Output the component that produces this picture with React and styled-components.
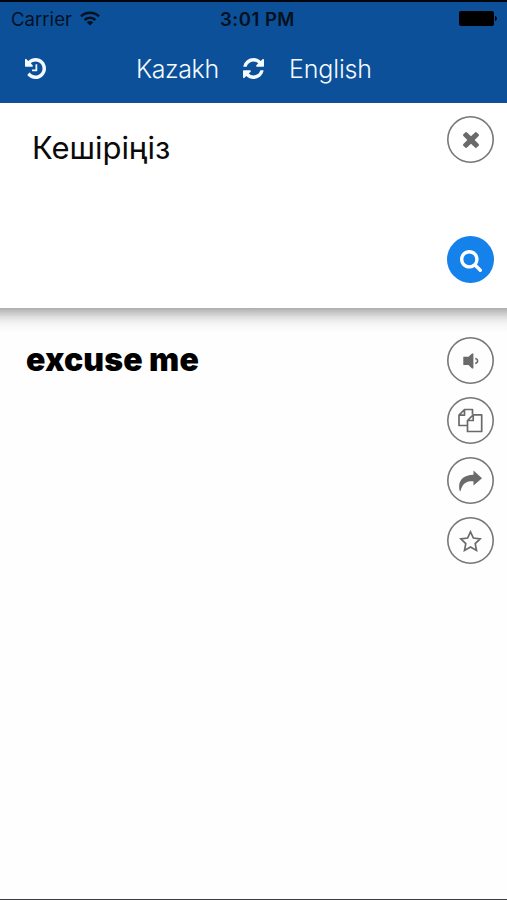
import React from 'react';
import styled, { createGlobalStyle } from 'styled-components';

const GlobalStyle = createGlobalStyle`
  * {
    box-sizing: border-box;
  }

  body {
    margin: 0;
    background: #fefefe;
    font-family: Inter, 'Liberation Sans', sans-serif;
  }

  svg {
    display: block;
  }
`;

const Screen = styled.div`
  display: flex;
  flex-direction: column;
  height: 900px;
  overflow: hidden;
  border-bottom: 1px solid #3c3c3e;
`;

const Header = styled.header`
  flex: none;
  height: 102.5px;
  border-top: 2px solid #02060c;
  background: #0b5098;
`;

const StatusBar = styled.div`
  display: grid;
  grid-template-columns: 1fr auto 1fr;
  align-items: center;
  height: 33px;
  padding: 0 10px 0 11px;
  color: #03101f;
`;

const Carrier = styled.div`
  display: flex;
  align-items: center;
  gap: 8px;
  font-size: 18.5px;
  letter-spacing: 0.05px;
`;

const Clock = styled.div`
  margin-left: 7px;
  font-size: 18.5px;
  font-weight: 600;
  letter-spacing: 0.5px;
`;

const Battery = styled.svg`
  justify-self: end;
`;

const NavBar = styled.nav`
  display: grid;
  grid-template-columns: 136px auto 1fr;
  align-items: center;
  height: 67px;
  color: #f4faff;
`;

const HistoryButton = styled.div`
  padding-left: 25px;
`;

const Languages = styled.div`
  display: flex;
  align-items: center;
  font-size: 25px;
  font-weight: 350;
`;

const Language = styled.span`
  width: 82px;
  letter-spacing: ${props => props.$spacing}px;
  white-space: nowrap;
`;

const SwapButton = styled.div`
  margin: 0 25px;
`;

const SourcePanel = styled.section`
  display: flex;
  flex: none;
  justify-content: space-between;
  height: 205.5px;
  padding: 13px 13px 25px 32px;
  background: #fff;
`;

const SourceText = styled.div`
  margin-top: 12px;
  font-size: 31px;
  line-height: 40px;
  letter-spacing: -0.05px;
  color: #0a0a0a;
`;

const ResultPanel = styled.section`
  display: flex;
  flex: 1;
  justify-content: space-between;
  padding: 29px 13px 0 26px;
  background: linear-gradient(#adadad, #c4c4c4 4px, #dedede 9px, #f1f1f1 14px, #f9f9f9 19px, #fefefe 25px);
`;

const ResultText = styled.div`
  margin-top: 3px;
  font-size: 32px;
  font-weight: 900;
  line-height: 40px;
  letter-spacing: 0.1px;
  color: #000;
`;

const Actions = styled.div`
  display: flex;
  flex-direction: column;
  justify-content: ${props => (props.$spread ? 'space-between' : 'flex-start')};
  gap: 13px;
`;

const RoundButton = styled.div`
  display: flex;
  align-items: center;
  justify-content: center;
  width: 47px;
  height: 47px;
  padding-top: ${props => props.$drop || 0}px;
  border-radius: 50%;
  box-shadow: ${props => (props.$primary ? 'none' : 'inset 0 0 0 1.6px #777')};
  background: ${props => (props.$primary ? '#1581ea' : 'transparent')};
  color: ${props => (props.$primary ? '#fff' : '#6a6a6a')};
`;

const WifiIcon = () => (
  <svg width="20" height="15" viewBox="0 0 20 15" fill="none" stroke="currentColor" strokeWidth="2.5">
    <path d="M1 5.3C6 .4 14 .4 19 5.3" />
    <path d="M4.6 9C7.7 6.1 12.3 6.1 15.4 9" />
    <path d="M10 14.5l-3.3-3.2c1.9-1.6 4.7-1.6 6.6 0z" fill="currentColor" stroke="none" />
  </svg>
);

const HistoryIcon = () => (
  <svg width="21" height="21" viewBox="0 128 1536 1536" fill="currentColor">
    <path d="M1536 896q0 156-61 298t-164 245-245 164-298 61q-172 0-327-72.500t-264-204.500q-7-10-6.500-22.500t8.500-20.500l137-138q10-9 25-9 16 2 23 12 73 95 179 147t225 52q104 0 198.500-40.500t163.500-109.500 109.500-163.500 40.500-198.500-40.500-198.500-109.500-163.500-163.500-109.500-198.500-40.500q-98 0-188 35.500t-160 101.500l137 138q31 30 14 69-17 40-59 40h-448q-26 0-45-19t-19-45v-448q0-42 40-59 39-17 69 14l130 129q107-101 244.500-156.500t284.500-55.500q156 0 298 61t245 164 164 245 61 298zm-640-288v448q0 14-9 23t-23 9h-320q-14 0-23-9t-9-23v-64q0-14 9-23t23-9h224v-352q0-14 9-23t23-9h64q14 0 23 9t9 23z" />
  </svg>
);

const SwapIcon = () => (
  <svg width="21" height="21" viewBox="128 128 1536 1536" fill="currentColor">
    <path d="M1639 1056q0 5-1 7-64 268-268 434.500t-478 166.500q-146 0-282.500-55t-243.500-157l-129 129q-19 19-45 19t-45-19-19-45v-448q0-26 19-45t45-19h448q26 0 45 19t19 45-19 45l-137 137q71 66 161 102t187 36q134 0 250-65t186-179q11-17 53-117 8-23 30-23h192q13 0 22.500 9.500t9.500 22.500zm25-800v448q0 26-19 45t-45 19h-448q-26 0-45-19t-19-45 19-45l138-138q-148-137-349-137-134 0-250 65t-186 179q-11 17-53 117-8 23-30 23h-199q-13 0-22.500-9.500t-9.500-22.500v-7q65-268 270-434.500t480-166.500q146 0 284 55.500t245 156.500l130-129q19-19 45-19t45 19 19 45z" />
  </svg>
);

const CloseIcon = () => (
  <svg width="16" height="16" viewBox="302 366 1188 1188" fill="currentColor">
    <path d="M1490 1322q0 40-28 68l-136 136q-28 28-68 28t-68-28l-294-294-294 294q-28 28-68 28t-68-28l-136-136q-28-28-28-68t28-68l294-294-294-294q-28-28-28-68t28-68l136-136q28-28 68-28t68 28l294 294 294-294q28-28 68-28t68 28l136 136q28 28 28 68t-28 68l-294 294 294 294q28 28 28 68z" />
  </svg>
);

const SearchIcon = () => (
  <svg width="22" height="22" viewBox="64 128 1664 1664" fill="currentColor">
    <path d="M1216 832q0-185-131.500-316.500t-316.500-131.500-316.500 131.500-131.500 316.500 131.500 316.500 316.500 131.500 316.500-131.500 131.500-316.500zm512 832q0 52-38 90t-90 38q-54 0-90-38l-343-342q-179 124-399 124-143 0-273.500-55.500t-225-150-150-225-55.500-273.500 55.500-273.500 150-225 225-150 273.500-55.500 273.500 55.500 225 150 150 225 55.500 273.500q0 220-124 399l343 343q37 37 37 90z" />
  </svg>
);

const SpeakerIcon = () => (
  <svg width="16" height="16" viewBox="0 0 16 16" fill="currentColor">
    <path d="M.3 3.800h5.200L9 .6h1.400v14.800H9L5.500 12H.3z" />
    <path d="M12.200 5.600c3.200.6 3.200 4.200 0 4.800" fill="none" stroke="currentColor" strokeWidth="1.500" />
  </svg>
);

const CopyIcon = () => (
  <svg width="25" height="25" viewBox="0 0 25 25" fill="none" stroke="currentColor" strokeWidth="1.700" strokeLinejoin="round">
    <path d="M9.500 17.500H1V7.200L6.500 1.500H14.500V6.500M6.500 1.500V7.200H1" />
    <path d="M15.200 6.800H23.700V23.500H9.500V12.500zV12.500H9.500" />
  </svg>
);

const ShareIcon = () => (
  <svg width="25" height="22" viewBox="0 0 25 22" fill="currentColor">
    <path d="M15.500.5L24 8.200l-8.500 7.300v-4.300C8.500 10.700 4.500 13 2.600 20.800 2.400 21.300 1.800 21.300 1.600 20.700-.5 11 4.500 5 15.500 4.800z" />
  </svg>
);

const StarIcon = () => (
  <svg width="23" height="22" viewBox="0 0 23 22" fill="none" stroke="currentColor" strokeWidth="1.700">
    <path d="M11.500 1.800l2.900 6.200 6.800.9-5 4.700 1.300 6.800-6-3.400-6 3.400 1.300-6.800-5-4.700 6.800-.9z" />
  </svg>
);

const App = () => {
  return (
    <>
      <GlobalStyle />
      <Screen>
        <Header>
          <StatusBar>
            <Carrier>
              Carrier
              <WifiIcon />
            </Carrier>
            <Clock>3:01 PM</Clock>
            <Battery width="38" height="15" viewBox="0 0 38 15" fill="#000">
              <rect width="35" height="15" rx="2" />
              <path d="M36 5c2.500.5 2.500 4.500 0 5z" />
            </Battery>
          </StatusBar>
          <NavBar>
            <HistoryButton>
              <HistoryIcon />
            </HistoryButton>
            <Languages>
              <Language $spacing={-0.4}>Kazakh</Language>
              <SwapButton>
                <SwapIcon />
              </SwapButton>
              <Language $spacing={-0.15}>English</Language>
            </Languages>
          </NavBar>
        </Header>
        <SourcePanel>
          <SourceText>Кешіріңіз</SourceText>
          <Actions $spread>
            <RoundButton $drop={2}>
              <CloseIcon />
            </RoundButton>
            <RoundButton $primary $drop={2}>
              <SearchIcon />
            </RoundButton>
          </Actions>
        </SourcePanel>
        <ResultPanel>
          <ResultText>excuse me</ResultText>
          <Actions>
            <RoundButton $drop={1}>
              <SpeakerIcon />
            </RoundButton>
            <RoundButton>
              <CopyIcon />
            </RoundButton>
            <RoundButton>
              <ShareIcon />
            </RoundButton>
            <RoundButton>
              <StarIcon />
            </RoundButton>
          </Actions>
        </ResultPanel>
      </Screen>
    </>
  );
};

export default App;
